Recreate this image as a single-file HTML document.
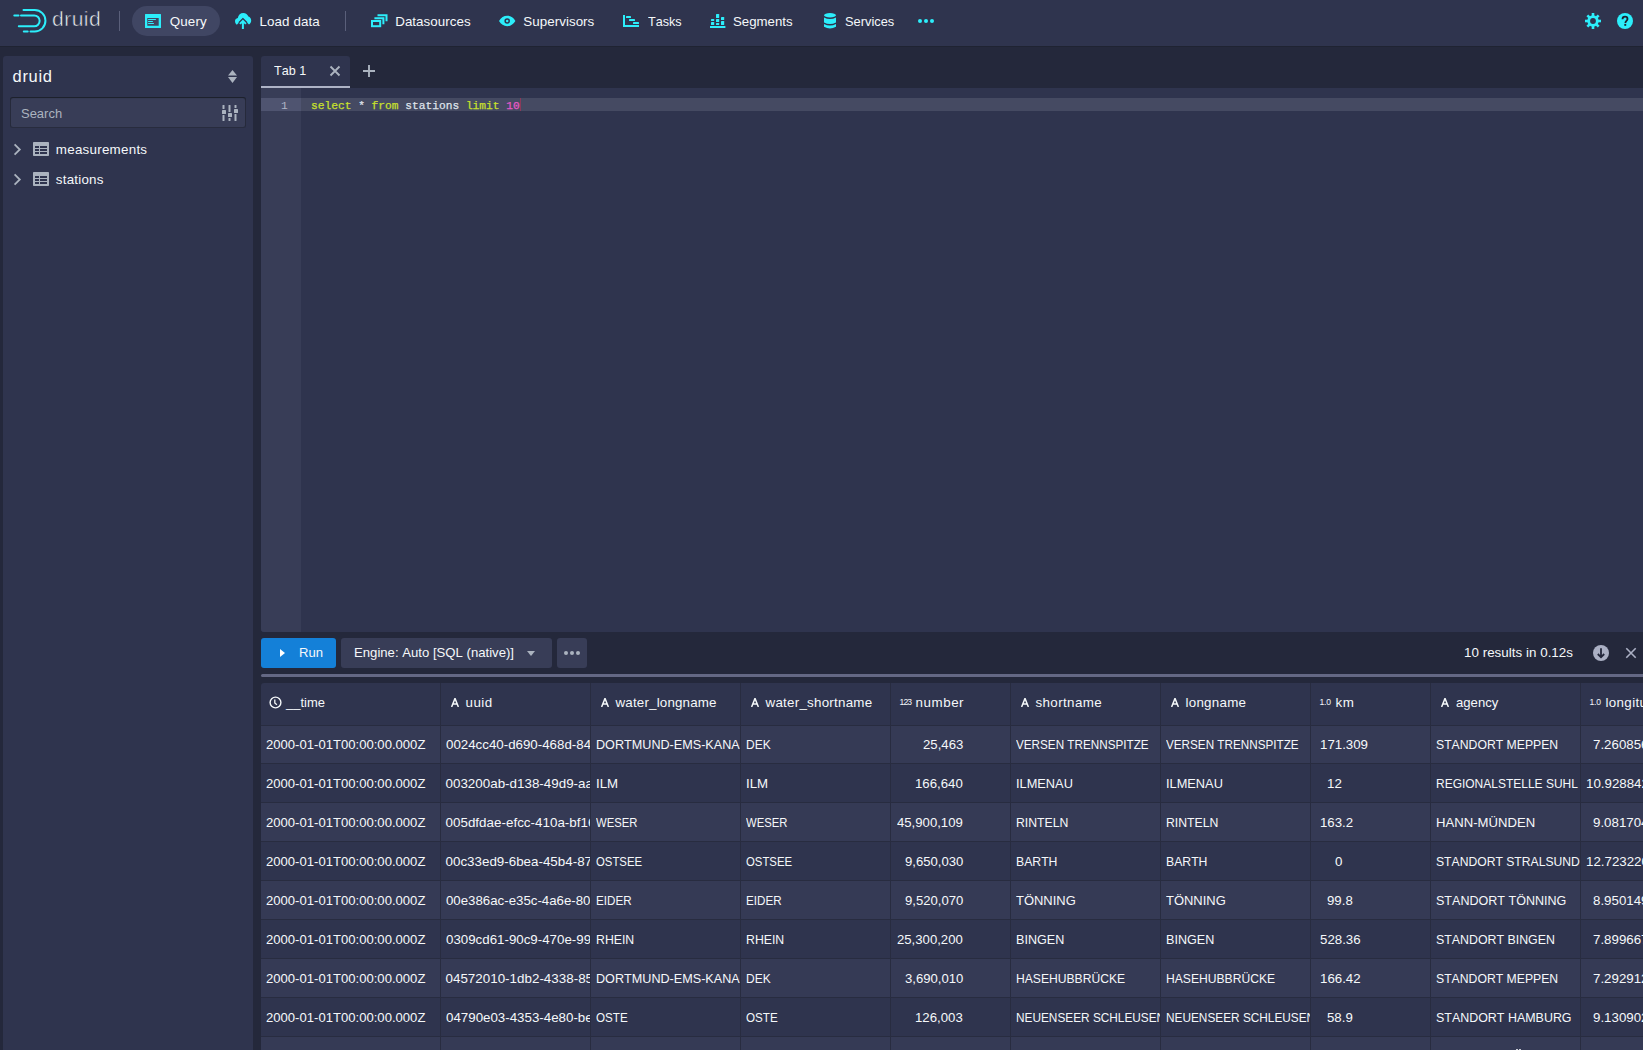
<!DOCTYPE html>
<html><head><meta charset="utf-8">
<style>
*{box-sizing:border-box;margin:0;padding:0}
html,body{width:1643px;height:1050px;overflow:hidden}
body{background:#24283b;font-family:"Liberation Sans",sans-serif;color:#f5f8fa;position:relative;font-size:13px;font-kerning:none}
.abs{position:absolute}
svg{display:block;position:absolute}
.t{position:absolute;line-height:1;white-space:nowrap}
#hdr{position:absolute;left:0;top:0;width:1643px;height:46px;background:#2f344e;box-shadow:0 1px 0 rgba(17,20,24,.25)}
.sep{position:absolute;top:11px;width:1px;height:20px;background:#5a5f7a}
#side{position:absolute;left:3px;top:56px;width:250px;height:1000px;background:#2f344e;border-radius:3px}
#tab{position:absolute;left:261px;top:56px;width:89px;height:32px;background:#2f344e;border-radius:3px 3px 0 0}
#editor{position:absolute;left:261px;top:88px;width:1390px;height:544px;background:#2f344e;border-radius:0 0 3px 3px;overflow:hidden}
#gutter{position:absolute;left:0;top:0;width:40px;height:544px;background:#383d57}
.btn{position:absolute;top:638px;height:30px;border-radius:3px}
#tbl{position:absolute;left:261px;top:683px;width:1400px;height:400px;background:#2f344e;border-radius:3px 0 0 0;overflow:hidden}
.row{position:absolute;left:0;width:1400px;height:39px;border-bottom:1px solid #282c40}
.odd{background:#353a55}
.vl{position:absolute;top:0;width:1px;height:400px;background:#282c40}
.col{position:absolute;top:0;height:400px;overflow:hidden}
.mono{font-family:"Liberation Mono",monospace}
</style></head><body>
<div id="hdr">
  <svg style="left:0;top:0" width="50" height="46" viewBox="0 0 50 46">
    <g fill="none" stroke="#2ceefb" stroke-width="2" stroke-linecap="round">
      <path d="M23.5 10H34.7A10.75 10.75 0 0 1 34.7 31.5H30.5"/>
      <path d="M21 15.4H34.2A5.45 5.45 0 0 1 34.2 26.3H18.8"/>
      <path d="M14.3 15.4H18.5"/>
      <path d="M23.8 31.5H27.7"/>
    </g>
  </svg>
  <div class="t" style="left:52px;top:8.3px;font-size:21px;letter-spacing:0.5px;color:#f0f2f6;-webkit-text-stroke:0.55px #2f344e">druid</div>
  <div class="sep" style="left:119px"></div>
  <div class="abs" style="left:132px;top:6px;width:88px;height:30px;border-radius:15px;background:#404663"></div>
  <svg style="left:145px;top:14px" width="16" height="14" viewBox="0 0 16 14">
    <path fill="#2ceefb" fill-rule="evenodd" d="M0.5 0H15.5Q16 0 16 .5V13.5Q16 14 15.5 14H.5Q0 14 0 13.5V.5Q0 0 .5 0ZM2.3 4.1V11.7H13.7V4.1Z"/>
    <g stroke="#2ceefb" stroke-width="1" stroke-linecap="round"><path d="M3.5 5.5H10.5M3.5 7.5H7.5M3.5 9.5H8.5"/></g>
  </svg>
  <svg style="left:235px;top:13px" width="17" height="17" viewBox="0 0 17 17">
    <path fill="#2ceefb" d="M1.8 11.8C.7 11.1 0 9.7 0 8.1c0-1.6 1.2-2.9 2.8-3.2C3.3 2 5.6 0 8.3 0c2.4 0 4.4 1.5 5.1 3.6C15 4.1 16.2 5.6 16.2 7.5c0 1.7-.8 3.2-2.2 4L8 5.4Z"/>
    <path d="M4.9 10.9L7.9 7.9 10.9 10.9M7.9 8V17" fill="none" stroke="#2f344e" stroke-width="4.4"/>
    <path d="M4.9 10.9L7.9 7.9 10.9 10.9M7.9 8V16" fill="none" stroke="#2ceefb" stroke-width="2"/>
  </svg>
  <div class="sep" style="left:345px"></div>
  <svg style="left:371px;top:13px" width="17" height="15" viewBox="0 0 17 15">
    <g fill="none" stroke="#2ceefb" stroke-width="2"><rect x="1" y="8" width="8.2" height="5.2"/><path d="M3.4 5.3H12.4V11.2M6.5 2.2H15.5V8.3"/></g>
  </svg>
  <svg style="left:499px;top:15px" width="17" height="12" viewBox="0 0 17 12">
    <path fill="#2ceefb" fill-rule="evenodd" d="M0 6C2 2.7 4.8 .8 8.2 .8s6.2 1.9 8.2 5.2C14.4 9.3 11.6 11.2 8.2 11.2S2 9.3 0 6ZM8.2 3.2A2.8 2.8 0 1 0 8.2 8.8 2.8 2.8 0 1 0 8.2 3.2ZM8.2 4.8A1.25 1.25 0 1 1 8.2 7.3 1.25 1.25 0 1 1 8.2 4.8Z"/>
  </svg>
  <svg style="left:623px;top:15px" width="16" height="12" viewBox="0 0 16 12">
    <g fill="#2ceefb"><rect x="0" y="0" width="2" height="12"/><rect x="0" y="10" width="16" height="2"/><rect x="3" y="1" width="5" height="2" rx=".6"/><rect x="6" y="4" width="6" height="2" rx=".6"/><rect x="10" y="7" width="6" height="2" rx=".6"/></g>
  </svg>
  <svg style="left:710px;top:14px" width="16" height="14" viewBox="0 0 16 14">
    <g fill="#2ceefb"><rect x="0" y="12" width="15.4" height="2"/><rect x="1" y="5" width="3.2" height="2" rx=".6"/><rect x="1" y="8" width="3.2" height="3.1" rx=".6"/><rect x="6" y="0" width="3.2" height="4" rx=".6"/><rect x="6" y="5" width="3.2" height="3" rx=".6"/><rect x="6" y="9" width="3.2" height="2.1" rx=".6"/><rect x="11" y="3" width="3.2" height="3" rx=".6"/><rect x="11" y="7" width="3.2" height="4.1" rx=".6"/></g>
  </svg>
  <svg style="left:824px;top:13px" width="12" height="16" viewBox="0 0 12 16">
    <g fill="#2ceefb"><ellipse cx="6" cy="2.2" rx="6" ry="2.2"/><path d="M0 4.6Q6 7.6 12 4.6V9.6Q6 12.6 0 9.6Z"/><path d="M0 10.9Q6 13.9 12 10.9V13.8Q6 17.1 0 13.8Z"/></g>
  </svg>
  <svg style="left:917px;top:18px" width="18" height="6" viewBox="0 0 18 6">
    <g fill="#2ceefb"><circle cx="3" cy="3" r="2"/><circle cx="9" cy="3" r="2"/><circle cx="15" cy="3" r="2"/></g>
  </svg>
  <svg style="left:1585px;top:13px" width="16" height="16" viewBox="0 0 16 16">
    <g fill="#2ceefb">
      <path fill-rule="evenodd" d="M8 2.3A5.7 5.7 0 1 0 8 13.7 5.7 5.7 0 1 0 8 2.3ZM8 5.1A2.9 2.9 0 1 1 8 10.9 2.9 2.9 0 1 1 8 5.1Z"/>
      <rect x="6.7" y="0" width="2.6" height="3.5"/><rect x="6.7" y="12.5" width="2.6" height="3.5"/>
      <rect x="0" y="6.7" width="3.5" height="2.6"/><rect x="12.5" y="6.7" width="3.5" height="2.6"/>
      <rect x="6.7" y="0" width="2.6" height="3.5" transform="rotate(45 8 8)"/><rect x="6.7" y="12.5" width="2.6" height="3.5" transform="rotate(45 8 8)"/>
      <rect x="0" y="6.7" width="3.5" height="2.6" transform="rotate(45 8 8)"/><rect x="12.5" y="6.7" width="3.5" height="2.6" transform="rotate(45 8 8)"/>
    </g>
  </svg>
  <svg style="left:1617px;top:13px" width="16" height="16" viewBox="0 0 16 16">
    <circle cx="8" cy="8" r="8" fill="#2ceefb"/>
    <path d="M5.5 6.2C5.5 4.7 6.6 3.7 8 3.7s2.5 1 2.5 2.3c0 1.5-1.7 1.9-2 3.1V10" fill="none" stroke="#1d1f2e" stroke-width="1.8"/>
    <rect x="7.3" y="10.9" width="1.9" height="1.9" fill="#1d1f2e"/>
  </svg>
<div class="t" style="left:169.70px;top:14.67px;font-size:13.39px;letter-spacing:0.162px">Query</div><div class="t" style="left:259.60px;top:14.67px;font-size:13.39px;letter-spacing:0.069px">Load data</div><div class="t" style="left:395.20px;top:14.67px;font-size:13.39px;letter-spacing:0.036px">Datasources</div><div class="t" style="left:523.30px;top:14.67px;font-size:13.39px;letter-spacing:0.037px">Supervisors</div><div class="t" style="left:647.80px;top:14.67px;font-size:13.39px;transform:scaleX(0.9433);transform-origin:0 0">Tasks</div><div class="t" style="left:733.30px;top:14.67px;font-size:13.39px;transform:scaleX(0.9907);transform-origin:0 0">Segments</div><div class="t" style="left:845.30px;top:14.67px;font-size:13.39px;transform:scaleX(0.9594);transform-origin:0 0">Services</div></div>
<div id="side"></div>
<svg style="left:228px;top:70px" width="9" height="13" viewBox="0 0 9 13">
  <g fill="#abb3bf"><path d="M4.5 0L9 5.6H0Z"/><path d="M0 7H9L4.5 13Z"/></g>
</svg>
<div class="abs" style="left:10px;top:97px;width:236px;height:31px;border-radius:3px;background:#383d57;box-shadow:inset 0 0 0 1px rgba(17,20,24,.4),inset 0 1px 1px rgba(17,20,24,.5)"></div>
<svg style="left:222px;top:105px" width="16" height="16" viewBox="0 0 16 16">
  <g fill="#abb3bf">
    <rect x="0.5" y="0" width="2" height="4" rx=".5"/><rect x="0" y="5" width="4" height="4" rx=".6"/><rect x="0.5" y="10" width="2" height="6" rx=".5"/>
    <rect x="6.5" y="0" width="2" height="7" rx=".5"/><rect x="6" y="8" width="4" height="4" rx=".6"/><rect x="6.5" y="13" width="2" height="3" rx=".5"/>
    <rect x="12.5" y="0" width="2" height="3" rx=".5"/><rect x="12" y="4" width="4" height="4" rx=".6"/><rect x="12.5" y="9" width="2" height="7" rx=".5"/>
  </g>
</svg>
<svg style="left:13px;top:143px" width="10" height="13" viewBox="0 0 10 13"><path d="M1.6 1.4L6.8 6.5 1.6 11.6" fill="none" stroke="#abb3bf" stroke-width="1.8"/></svg>
<svg style="left:33px;top:142px" width="16" height="14" viewBox="0 0 16 14"><path fill="#abb3bf" fill-rule="evenodd" d="M.8 0H15.2Q16 0 16 .8V13.2Q16 14 15.2 14H.8Q0 14 0 13.2V.8Q0 0 .8 0ZM2 4V6H6V4ZM7 4V6H14V4ZM2 7V9H6V7ZM7 7V9H14V7ZM2 10V12H6V10ZM7 10V12H14V10Z"/></svg>
<svg style="left:13px;top:173px" width="10" height="13" viewBox="0 0 10 13"><path d="M1.6 1.4L6.8 6.5 1.6 11.6" fill="none" stroke="#abb3bf" stroke-width="1.8"/></svg>
<svg style="left:33px;top:172px" width="16" height="14" viewBox="0 0 16 14"><path fill="#abb3bf" fill-rule="evenodd" d="M.8 0H15.2Q16 0 16 .8V13.2Q16 14 15.2 14H.8Q0 14 0 13.2V.8Q0 0 .8 0ZM2 4V6H6V4ZM7 4V6H14V4ZM2 7V9H6V7ZM7 7V9H14V7ZM2 10V12H6V10ZM7 10V12H14V10Z"/></svg>
<div class="t" style="left:12.60px;top:68.05px;font-size:16.48px;letter-spacing:0.677px">druid</div><div class="t" style="left:20.50px;top:106.67px;font-size:13.39px;transform:scaleX(0.9700);transform-origin:0 0;color:#abb3bf">Search</div><div class="t" style="left:55.80px;top:142.67px;font-size:13.39px;letter-spacing:0.253px">measurements</div><div class="t" style="left:55.80px;top:172.67px;font-size:13.39px;letter-spacing:0.226px">stations</div><div id="tab"></div>
<div class="abs" style="left:261px;top:86px;width:89px;height:2px;background:#aeb3c6"></div>
<svg style="left:329px;top:65px" width="12" height="12" viewBox="0 0 12 12"><path d="M1.5 1.5L10.5 10.5M10.5 1.5L1.5 10.5" stroke="#abb3bf" stroke-width="1.9" fill="none"/></svg>
<svg style="left:363px;top:65px" width="12" height="12" viewBox="0 0 12 12"><path d="M6 0V12M0 6H12" stroke="#abb3bf" stroke-width="1.9" fill="none"/></svg>
<div id="editor">
  <div id="gutter"></div>
  <div class="abs" style="left:0;top:10px;width:40px;height:13px;background:#4f5470"></div>
  <div class="abs" style="left:40px;top:10px;width:1400px;height:13px;background:#454a62"></div>
  <div class="t mono" style="left:20px;top:13.4px;font-size:11.23px;color:#b0b4c6">1</div>
  <div class="t mono" style="left:50px;top:13.4px;font-size:11.23px;color:#dfe2ea;-webkit-text-stroke:0.25px"><span style="color:#c9e02c">select</span> * <span style="color:#c9e02c">from</span> stations <span style="color:#c9e02c">limit</span> <span style="color:#e858c8">10</span></div>
  <div class="abs" style="left:259px;top:10px;width:1px;height:13px;background:#8a3a5a"></div>
</div>
<div class="t" style="left:273.60px;top:63.87px;font-size:13.39px;transform:scaleX(0.9408);transform-origin:0 0">Tab 1</div><div class="btn" style="left:261px;width:75px;background:#1480d8"></div>
<svg style="left:280px;top:649px" width="5" height="8" viewBox="0 0 5 8"><path d="M0 0L5 4 0 8Z" fill="#fff"/></svg>
<div class="btn" style="left:341px;width:211px;background:#383d57"></div>
<svg style="left:527px;top:651px" width="8" height="5" viewBox="0 0 8 5"><path d="M0 0H8L4 5Z" fill="#abb3bf"/></svg>
<div class="btn" style="left:557px;width:30px;background:#383d57"></div>
<svg style="left:563px;top:650px" width="18" height="6" viewBox="0 0 18 6"><g fill="#abb3bf"><circle cx="3" cy="3" r="2"/><circle cx="9" cy="3" r="2"/><circle cx="15" cy="3" r="2"/></g></svg>
<svg style="left:1593px;top:645px" width="16" height="16" viewBox="0 0 16 16">
  <circle cx="8" cy="8" r="8" fill="#abb0c4"/>
  <path d="M8 3.2V12M4.8 9L8 12.3 11.2 9" fill="none" stroke="#22263a" stroke-width="1.8"/>
</svg>
<svg style="left:1625px;top:647px" width="12" height="12" viewBox="0 0 12 12"><path d="M1.3 1.3L10.7 10.7M10.7 1.3L1.3 10.7" stroke="#abb0c4" stroke-width="1.6" fill="none"/></svg>
<div class="abs" style="left:261px;top:674px;width:1400px;height:3px;border-radius:2px;background:#646884"></div>
<div class="t" style="left:298.80px;top:645.67px;font-size:13.39px;transform:scaleX(0.9784);transform-origin:0 0">Run</div><div class="t" style="left:353.50px;top:645.67px;font-size:13.39px;transform:scaleX(0.9828);transform-origin:0 0">Engine: Auto [SQL (native)]</div><div class="t" style="left:1464.00px;top:645.67px;font-size:13.39px;letter-spacing:0.024px">10 results in 0.12s</div><div id="tbl">
<div class="row" style="top:0;height:43px;background:transparent"></div>
<div class="row odd" style="top:43px;height:38px"></div>
<div class="row" style="top:81px"></div>
<div class="row odd" style="top:120px"></div>
<div class="row" style="top:159px"></div>
<div class="row odd" style="top:198px"></div>
<div class="row" style="top:237px"></div>
<div class="row odd" style="top:276px"></div>
<div class="row" style="top:315px"></div>
<div class="row odd" style="top:354px"></div>
<div class="row" style="top:393px"></div>
<div class="vl" style="left:179px"></div>
<div class="vl" style="left:329px"></div>
<div class="vl" style="left:479px"></div>
<div class="vl" style="left:629px"></div>
<div class="vl" style="left:749px"></div>
<div class="vl" style="left:899px"></div>
<div class="vl" style="left:1049px"></div>
<div class="vl" style="left:1169px"></div>
<div class="vl" style="left:1319px"></div>
<div class="vl" style="left:1469px"></div>
</div>
<svg style="left:268.5px;top:695.8px" width="13" height="13" viewBox="0 0 13 13"><circle cx="6.5" cy="6.5" r="5.4" fill="none" stroke="#f5f8fa" stroke-width="1.4"/><path d="M5.8 3.6V6.9L7.9 8.8" fill="none" stroke="#f5f8fa" stroke-width="1.3"/></svg>
<svg style="left:451px;top:697.6px" width="8" height="9.2" viewBox="0 0 8 9.2"><path d="M.6 9L4 .4 7.4 9M1.9 6H6.1" fill="none" stroke="#f5f8fa" stroke-width="1.5"/></svg>
<svg style="left:601px;top:697.6px" width="8" height="9.2" viewBox="0 0 8 9.2"><path d="M.6 9L4 .4 7.4 9M1.9 6H6.1" fill="none" stroke="#f5f8fa" stroke-width="1.5"/></svg>
<svg style="left:751px;top:697.6px" width="8" height="9.2" viewBox="0 0 8 9.2"><path d="M.6 9L4 .4 7.4 9M1.9 6H6.1" fill="none" stroke="#f5f8fa" stroke-width="1.5"/></svg>
<div class="t" style="left:899.6px;top:698.4px;font-size:8.6px;letter-spacing:-0.9px">123</div>
<svg style="left:1021px;top:697.6px" width="8" height="9.2" viewBox="0 0 8 9.2"><path d="M.6 9L4 .4 7.4 9M1.9 6H6.1" fill="none" stroke="#f5f8fa" stroke-width="1.5"/></svg>
<svg style="left:1171px;top:697.6px" width="8" height="9.2" viewBox="0 0 8 9.2"><path d="M.6 9L4 .4 7.4 9M1.9 6H6.1" fill="none" stroke="#f5f8fa" stroke-width="1.5"/></svg>
<div class="t" style="left:1319.4px;top:698.4px;font-size:8.6px;letter-spacing:-0.2px">1.0</div>
<svg style="left:1441px;top:697.6px" width="8" height="9.2" viewBox="0 0 8 9.2"><path d="M.6 9L4 .4 7.4 9M1.9 6H6.1" fill="none" stroke="#f5f8fa" stroke-width="1.5"/></svg>
<div class="t" style="left:1589.4px;top:698.4px;font-size:8.6px;letter-spacing:-0.2px">1.0</div>
<div class="col" style="left:261px;top:683px;width:179px">
<div class="t" style="left:24.50px;top:12.67px;font-size:13.39px;transform:scaleX(0.9683);transform-origin:0 0">__time</div><div class="t" style="left:4.50px;top:54.67px;font-size:13.39px;transform:scaleX(0.9788);transform-origin:0 0">2000-01-01T00:00:00.000Z</div><div class="t" style="left:4.50px;top:93.67px;font-size:13.39px;transform:scaleX(0.9788);transform-origin:0 0">2000-01-01T00:00:00.000Z</div><div class="t" style="left:4.50px;top:132.67px;font-size:13.39px;transform:scaleX(0.9788);transform-origin:0 0">2000-01-01T00:00:00.000Z</div><div class="t" style="left:4.50px;top:171.67px;font-size:13.39px;transform:scaleX(0.9788);transform-origin:0 0">2000-01-01T00:00:00.000Z</div><div class="t" style="left:4.50px;top:210.67px;font-size:13.39px;transform:scaleX(0.9788);transform-origin:0 0">2000-01-01T00:00:00.000Z</div><div class="t" style="left:4.50px;top:249.67px;font-size:13.39px;transform:scaleX(0.9788);transform-origin:0 0">2000-01-01T00:00:00.000Z</div><div class="t" style="left:4.50px;top:288.67px;font-size:13.39px;transform:scaleX(0.9788);transform-origin:0 0">2000-01-01T00:00:00.000Z</div><div class="t" style="left:4.50px;top:327.67px;font-size:13.39px;transform:scaleX(0.9788);transform-origin:0 0">2000-01-01T00:00:00.000Z</div><div class="t" style="left:4.50px;top:366.67px;font-size:13.39px;transform:scaleX(0.9788);transform-origin:0 0">2000-01-01T00:00:00.000Z</div></div>
<div class="col" style="left:441px;top:683px;width:149px">
<div class="t" style="left:24.50px;top:12.67px;font-size:13.39px;letter-spacing:0.484px">uuid</div><div class="t" style="left:4.50px;top:54.67px;font-size:13.39px;transform:scaleX(0.9952);transform-origin:0 0">0024cc40-d690-468d-8434-5c0e1b7e8a2f</div><div class="t" style="left:4.50px;top:93.67px;font-size:13.39px;letter-spacing:0.010px">003200ab-d138-49d9-aa7d-2b51c1f3e9a0</div><div class="t" style="left:4.50px;top:132.67px;font-size:13.39px;letter-spacing:0.021px">005dfdae-efcc-410a-bf16-8e0e0fa5c3b1</div><div class="t" style="left:4.50px;top:171.67px;font-size:13.39px;letter-spacing:0.000px">00c33ed9-6bea-45b4-8745-a1c3b2d9e07f</div><div class="t" style="left:4.50px;top:210.67px;font-size:13.39px;transform:scaleX(0.9911);transform-origin:0 0">00e386ac-e35c-4a6e-8031-7d9f4e2c1b56</div><div class="t" style="left:4.50px;top:249.67px;font-size:13.39px;transform:scaleX(0.9952);transform-origin:0 0">0309cd61-90c9-470e-9921-3fa8c6d0b7e4</div><div class="t" style="left:4.50px;top:288.67px;font-size:13.39px;letter-spacing:0.013px">04572010-1db2-4338-8512-c4e7a9b0d3f8</div><div class="t" style="left:4.50px;top:327.67px;font-size:13.39px;transform:scaleX(0.9959);transform-origin:0 0">04790e03-4353-4e80-be92-6a1d3c8f5e07</div><div class="t" style="left:4.50px;top:366.67px;font-size:13.39px;letter-spacing:0.018px">04b1f7a2-8c3e-4d5a-9f6b-1e2d3c4b5a69</div></div>
<div class="col" style="left:591px;top:683px;width:149px">
<div class="t" style="left:24.50px;top:12.67px;font-size:13.39px;letter-spacing:0.167px">water_longname</div><div class="t" style="left:4.50px;top:54.67px;font-size:13.39px;transform:scaleX(0.9436);transform-origin:0 0">DORTMUND-EMS-KANAL</div><div class="t" style="left:4.50px;top:93.67px;font-size:13.39px;transform:scaleX(0.9905);transform-origin:0 0">ILM</div><div class="t" style="left:4.50px;top:132.67px;font-size:13.39px;transform:scaleX(0.8437);transform-origin:0 0">WESER</div><div class="t" style="left:4.50px;top:171.67px;font-size:13.39px;transform:scaleX(0.8484);transform-origin:0 0">OSTSEE</div><div class="t" style="left:4.50px;top:210.67px;font-size:13.39px;transform:scaleX(0.8699);transform-origin:0 0">EIDER</div><div class="t" style="left:4.50px;top:249.67px;font-size:13.39px;transform:scaleX(0.9189);transform-origin:0 0">RHEIN</div><div class="t" style="left:4.50px;top:288.67px;font-size:13.39px;transform:scaleX(0.9436);transform-origin:0 0">DORTMUND-EMS-KANAL</div><div class="t" style="left:4.50px;top:327.67px;font-size:13.39px;transform:scaleX(0.8701);transform-origin:0 0">OSTE</div><div class="t" style="left:4.50px;top:366.67px;font-size:13.39px;transform:scaleX(0.8568);transform-origin:0 0">TRAVE</div></div>
<div class="col" style="left:741px;top:683px;width:149px">
<div class="t" style="left:24.50px;top:12.67px;font-size:13.39px;letter-spacing:0.238px">water_shortname</div><div class="t" style="left:4.50px;top:54.67px;font-size:13.39px;transform:scaleX(0.8966);transform-origin:0 0">DEK</div><div class="t" style="left:4.50px;top:93.67px;font-size:13.39px;transform:scaleX(0.9905);transform-origin:0 0">ILM</div><div class="t" style="left:4.50px;top:132.67px;font-size:13.39px;transform:scaleX(0.8437);transform-origin:0 0">WESER</div><div class="t" style="left:4.50px;top:171.67px;font-size:13.39px;transform:scaleX(0.8484);transform-origin:0 0">OSTSEE</div><div class="t" style="left:4.50px;top:210.67px;font-size:13.39px;transform:scaleX(0.8699);transform-origin:0 0">EIDER</div><div class="t" style="left:4.50px;top:249.67px;font-size:13.39px;transform:scaleX(0.9189);transform-origin:0 0">RHEIN</div><div class="t" style="left:4.50px;top:288.67px;font-size:13.39px;transform:scaleX(0.8966);transform-origin:0 0">DEK</div><div class="t" style="left:4.50px;top:327.67px;font-size:13.39px;transform:scaleX(0.8701);transform-origin:0 0">OSTE</div><div class="t" style="left:4.50px;top:366.67px;font-size:13.39px;transform:scaleX(0.8568);transform-origin:0 0">TRAVE</div></div>
<div class="col" style="left:891px;top:683px;width:119px">
<div class="t" style="left:24.50px;top:12.67px;font-size:13.39px;letter-spacing:0.542px">number</div><div class="t" style="left:31.65px;top:54.67px;font-size:13.39px;transform:scaleX(0.9853);transform-origin:0 0">25,463</div><div class="t" style="left:24.21px;top:93.67px;font-size:13.39px;transform:scaleX(0.9873);transform-origin:0 0">166,640</div><div class="t" style="left:6.16px;top:132.67px;font-size:13.39px;transform:scaleX(0.9824);transform-origin:0 0">45,900,109</div><div class="t" style="left:13.60px;top:171.67px;font-size:13.39px;transform:scaleX(0.9805);transform-origin:0 0">9,650,030</div><div class="t" style="left:13.60px;top:210.67px;font-size:13.39px;transform:scaleX(0.9805);transform-origin:0 0">9,520,070</div><div class="t" style="left:6.16px;top:249.67px;font-size:13.39px;transform:scaleX(0.9824);transform-origin:0 0">25,300,200</div><div class="t" style="left:13.60px;top:288.67px;font-size:13.39px;transform:scaleX(0.9805);transform-origin:0 0">3,690,010</div><div class="t" style="left:24.21px;top:327.67px;font-size:13.39px;transform:scaleX(0.9873);transform-origin:0 0">126,003</div><div class="t" style="left:13.60px;top:366.67px;font-size:13.39px;transform:scaleX(0.9805);transform-origin:0 0">1,234,567</div></div>
<div class="col" style="left:1011px;top:683px;width:149px">
<div class="t" style="left:24.50px;top:12.67px;font-size:13.39px;letter-spacing:0.367px">shortname</div><div class="t" style="left:4.50px;top:54.67px;font-size:13.39px;transform:scaleX(0.8745);transform-origin:0 0">VERSEN TRENNSPITZE</div><div class="t" style="left:4.50px;top:93.67px;font-size:13.39px;transform:scaleX(0.9569);transform-origin:0 0">ILMENAU</div><div class="t" style="left:4.50px;top:132.67px;font-size:13.39px;transform:scaleX(0.9159);transform-origin:0 0">RINTELN</div><div class="t" style="left:4.50px;top:171.67px;font-size:13.39px;transform:scaleX(0.9146);transform-origin:0 0">BARTH</div><div class="t" style="left:4.50px;top:210.67px;font-size:13.39px;transform:scaleX(0.9693);transform-origin:0 0">TÖNNING</div><div class="t" style="left:4.50px;top:249.67px;font-size:13.39px;transform:scaleX(0.9417);transform-origin:0 0">BINGEN</div><div class="t" style="left:4.50px;top:288.67px;font-size:13.39px;transform:scaleX(0.9064);transform-origin:0 0">HASEHUBBRÜCKE</div><div class="t" style="left:4.50px;top:327.67px;font-size:13.39px;transform:scaleX(0.8841);transform-origin:0 0">NEUENSEER SCHLEUSEN</div><div class="t" style="left:4.50px;top:366.67px;font-size:13.39px;transform:scaleX(0.8991);transform-origin:0 0">LÜBECK</div></div>
<div class="col" style="left:1161px;top:683px;width:149px">
<div class="t" style="left:24.50px;top:12.67px;font-size:13.39px;letter-spacing:0.258px">longname</div><div class="t" style="left:4.50px;top:54.67px;font-size:13.39px;transform:scaleX(0.8745);transform-origin:0 0">VERSEN TRENNSPITZE</div><div class="t" style="left:4.50px;top:93.67px;font-size:13.39px;transform:scaleX(0.9569);transform-origin:0 0">ILMENAU</div><div class="t" style="left:4.50px;top:132.67px;font-size:13.39px;transform:scaleX(0.9159);transform-origin:0 0">RINTELN</div><div class="t" style="left:4.50px;top:171.67px;font-size:13.39px;transform:scaleX(0.9146);transform-origin:0 0">BARTH</div><div class="t" style="left:4.50px;top:210.67px;font-size:13.39px;transform:scaleX(0.9693);transform-origin:0 0">TÖNNING</div><div class="t" style="left:4.50px;top:249.67px;font-size:13.39px;transform:scaleX(0.9417);transform-origin:0 0">BINGEN</div><div class="t" style="left:4.50px;top:288.67px;font-size:13.39px;transform:scaleX(0.9064);transform-origin:0 0">HASEHUBBRÜCKE</div><div class="t" style="left:4.50px;top:327.67px;font-size:13.39px;transform:scaleX(0.8841);transform-origin:0 0">NEUENSEER SCHLEUSEN</div><div class="t" style="left:4.50px;top:366.67px;font-size:13.39px;transform:scaleX(0.8991);transform-origin:0 0">LÜBECK</div></div>
<div class="col" style="left:1311px;top:683px;width:119px">
<div class="t" style="left:24.50px;top:12.67px;font-size:13.39px;letter-spacing:0.534px">km</div><div class="t" style="left:8.70px;top:54.67px;font-size:13.39px;transform:scaleX(0.9929);transform-origin:0 0">171.309</div><div class="t" style="left:16.13px;top:93.67px;font-size:13.39px;transform:scaleX(0.9982);transform-origin:0 0">12</div><div class="t" style="left:8.70px;top:132.67px;font-size:13.39px;transform:scaleX(0.9906);transform-origin:0 0">163.2</div><div class="t" style="left:23.57px;top:171.67px;font-size:13.39px;transform:scaleX(0.9982);transform-origin:0 0">0</div><div class="t" style="left:16.13px;top:210.67px;font-size:13.39px;transform:scaleX(0.9884);transform-origin:0 0">99.8</div><div class="t" style="left:8.70px;top:249.67px;font-size:13.39px;transform:scaleX(0.9920);transform-origin:0 0">528.36</div><div class="t" style="left:8.70px;top:288.67px;font-size:13.39px;transform:scaleX(0.9920);transform-origin:0 0">166.42</div><div class="t" style="left:16.13px;top:327.67px;font-size:13.39px;transform:scaleX(0.9884);transform-origin:0 0">58.9</div><div class="t" style="left:16.13px;top:366.67px;font-size:13.39px;transform:scaleX(0.9884);transform-origin:0 0">12.4</div></div>
<div class="col" style="left:1431px;top:683px;width:149px">
<div class="t" style="left:24.50px;top:12.67px;font-size:13.39px;transform:scaleX(0.9816);transform-origin:0 0">agency</div><div class="t" style="left:4.50px;top:54.67px;font-size:13.39px;transform:scaleX(0.9132);transform-origin:0 0">STANDORT MEPPEN</div><div class="t" style="left:4.50px;top:93.67px;font-size:13.39px;transform:scaleX(0.8960);transform-origin:0 0">REGIONALSTELLE SUHL</div><div class="t" style="left:4.50px;top:132.67px;font-size:13.39px;transform:scaleX(0.9810);transform-origin:0 0">HANN-MÜNDEN</div><div class="t" style="left:4.50px;top:171.67px;font-size:13.39px;transform:scaleX(0.9088);transform-origin:0 0">STANDORT STRALSUND</div><div class="t" style="left:4.50px;top:210.67px;font-size:13.39px;transform:scaleX(0.9380);transform-origin:0 0">STANDORT TÖNNING</div><div class="t" style="left:4.50px;top:249.67px;font-size:13.39px;transform:scaleX(0.9245);transform-origin:0 0">STANDORT BINGEN</div><div class="t" style="left:4.50px;top:288.67px;font-size:13.39px;transform:scaleX(0.9132);transform-origin:0 0">STANDORT MEPPEN</div><div class="t" style="left:4.50px;top:327.67px;font-size:13.39px;transform:scaleX(0.9307);transform-origin:0 0">STANDORT HAMBURG</div><div class="t" style="left:4.50px;top:366.67px;font-size:13.39px;transform:scaleX(0.9073);transform-origin:0 0">STANDORT LÜBECK</div></div>
<div class="col" style="left:1581px;top:683px;width:149px">
<div class="t" style="left:24.50px;top:12.67px;font-size:13.39px;letter-spacing:0.338px">longitude</div><div class="t" style="left:12.17px;top:54.67px;font-size:13.39px;transform:scaleX(0.9946);transform-origin:0 0">7.26085611</div><div class="t" style="left:4.73px;top:93.67px;font-size:13.39px;transform:scaleX(0.9949);transform-origin:0 0">10.92884274</div><div class="t" style="left:12.17px;top:132.67px;font-size:13.39px;transform:scaleX(0.9946);transform-origin:0 0">9.08170417</div><div class="t" style="left:4.73px;top:171.67px;font-size:13.39px;transform:scaleX(0.9949);transform-origin:0 0">12.72322017</div><div class="t" style="left:12.17px;top:210.67px;font-size:13.39px;transform:scaleX(0.9946);transform-origin:0 0">8.95014928</div><div class="t" style="left:12.17px;top:249.67px;font-size:13.39px;transform:scaleX(0.9946);transform-origin:0 0">7.89966758</div><div class="t" style="left:12.17px;top:288.67px;font-size:13.39px;transform:scaleX(0.9946);transform-origin:0 0">7.29291204</div><div class="t" style="left:12.17px;top:327.67px;font-size:13.39px;transform:scaleX(0.9946);transform-origin:0 0">9.13090246</div><div class="t" style="left:4.73px;top:366.67px;font-size:13.39px;transform:scaleX(0.9946);transform-origin:0 0">10.6866782</div></div>
<div class="abs" style="left:1516px;top:1049px;width:2px;height:1px;background:#c9ccd6"></div><div class="abs" style="left:1519px;top:1049px;width:2px;height:1px;background:#c9ccd6"></div>
</body></html>
